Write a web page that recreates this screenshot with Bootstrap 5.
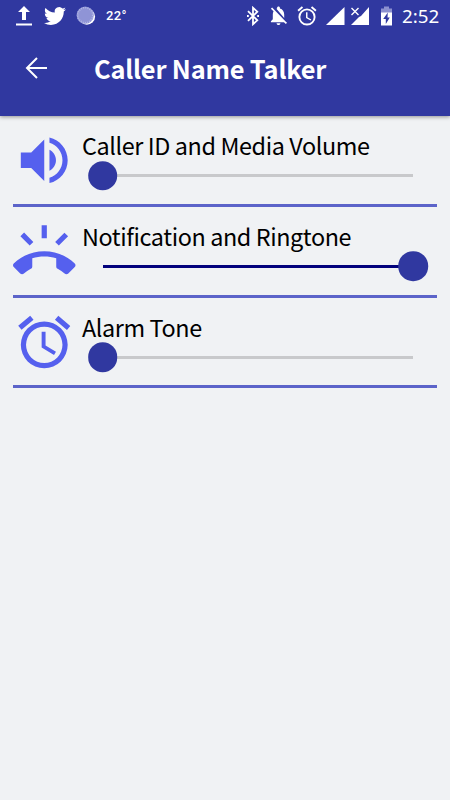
<!DOCTYPE html>
<html lang="en">
<head>
<meta charset="utf-8">
<meta name="viewport" content="width=device-width, initial-scale=1">
<title>Caller Name Talker</title>
<link href="https://cdn.jsdelivr.net/npm/bootstrap@5.3.0/dist/css/bootstrap.min.css" rel="stylesheet">
<style>
body{background:#f0f2f4;font-family:"Noto Sans CJK SC","Noto Sans",sans-serif;overflow:hidden}
svg{display:block;flex:none}
.app-header{background:#3038a0;height:116px;box-shadow:0 1px 4px rgba(0,0,0,.4)}
.status-bar{height:32px;padding-left:16px;padding-right:10px}
.icon-tweet{margin-left:12px}
.icon-weather{margin-left:10px}
.icon-bell{margin-left:9px}
.icon-clock{margin-left:9px}
.icon-signal{margin-left:9px}
.icon-nosim{margin-left:5px}
.icon-battery{margin-left:10px}
.status-temp{font:500 13px/32px Roboto,sans-serif;margin-left:10px;letter-spacing:.3px}
.status-clock{font:400 18.8px/32px "Noto Sans",sans-serif;margin-left:9px;width:38px;white-space:nowrap}
.app-bar{height:72px;padding-left:25px}
.app-title{font-size:25.4px;line-height:40px;font-weight:700;margin-left:45px;letter-spacing:-.2px}
.setting{height:90.8px;margin:0 13px;border-bottom:3px solid #5c64c9}
.setting-icon{width:62.5px;height:62.5px;margin-top:13.4px;fill:#5560ee}
.setting-body{margin-left:6.5px;padding-top:13.2px}
.setting-label{font-size:23.4px;line-height:32px;color:#000;white-space:nowrap;letter-spacing:-.4px}
.slider{height:30px;margin:-.5px 24px 0 20.5px}
.slider-track{height:3px;background:#c8c9cb}
.slider-full .slider-track{background:#02027c}
.slider-thumb{width:29.6px;height:29.6px;background:#3038a0;left:0;top:50%}
.slider-full .slider-thumb{left:100%}
</style>
</head>
<body>
<header class="app-header text-white position-relative">
  <div class="status-bar d-flex align-items-center">
    <svg width="16" height="20" viewBox="0 0 16 20" fill="#fff"><path d="M8 0l6 6h-4v8H6V6H2zM0 17.400h16v2H0z"/></svg>
    <svg class="icon-tweet" width="22" height="22" viewBox="0 0 24 24" fill="#fff"><path d="M23.950 4.570a10 10 0 0 1-2.820.77 4.960 4.960 0 0 0 2.160-2.720c-.95.55-2 .96-3.130 1.180a4.920 4.920 0 0 0-8.380 4.480C7.690 8.090 4.070 6.130 1.640 3.160a4.800 4.800 0 0 0-.67 2.480c0 1.710.87 3.210 2.190 4.100a4.900 4.900 0 0 1-2.230-.62v.06a4.920 4.920 0 0 0 3.950 4.830 5 5 0 0 1-2.210.08 4.940 4.940 0 0 0 4.600 3.420A9.870 9.870 0 0 1 0 19.540a13.990 13.990 0 0 0 7.550 2.210c9.060 0 14.010-7.500 14.010-13.980 0-.21 0-.42-.02-.63a9.940 9.940 0 0 0 2.460-2.550z"/></svg>
    <svg class="icon-weather" width="20" height="20" viewBox="0 0 20 20"><circle cx="10.800" cy="10.500" r="8.300" fill="#fff"/><circle cx="9.200" cy="9.200" r="8.600" fill="#8f94d6"/><circle cx="9.200" cy="9.200" r="7.500" fill="none" stroke="#b4b8e6" stroke-width="1.600" stroke-dasharray="1 1.200"/></svg>
    <span class="status-temp">22°</span>
    <div class="d-flex align-items-center ms-auto">
      <svg width="14" height="20" viewBox="0 0 14 20" fill="none" stroke="#fff" stroke-width="1.800"><path d="M2 5.200l9.300 9.100L7 18.200V1.800l4.300 3.900L2 14.800"/><path d="M1 10h1.800M11.200 10H13"/></svg>
      <svg class="icon-bell" width="19" height="20" viewBox="2 2 20 21" fill="#fff"><path d="M20 18.690L7.840 6.140 5.270 3.490 4 4.760l2.800 2.800v.01c-.52.99-.8 2.160-.8 3.420v5l-2 2v1h13.730l2 2L21 19.720l-1-1.030zM12 22c1.110 0 2-.89 2-2h-4c0 1.110.89 2 2 2zm6-7.320V11c0-3.080-1.640-5.640-4.500-6.320V4c0-.83-.67-1.500-1.500-1.500s-1.500.67-1.500 1.500v.68c-.15.03-.29.08-.42.12-.1.03-.2.07-.3.110z"/></svg>
      <svg class="icon-clock" width="20" height="20" viewBox="2 1.500 20 21" fill="#fff"><path d="M22 5.720l-4.600-3.860-1.290 1.530 4.600 3.860zM7.880 3.390L6.600 1.860 2 5.710l1.290 1.530zM12.500 8H11v6l4.750 2.850.75-1.230-4-2.370zM12 4a9 9 0 1 0 0 18 9 9 0 0 0 0-18zm0 16a7 7 0 1 1 0-14 7 7 0 0 1 0 14z"/></svg>
      <svg class="icon-signal" width="19" height="20" viewBox="0 0 19 20" fill="#fff"><path d="M0 19L18.500 1v18z"/></svg>
      <svg class="icon-nosim" width="20" height="20" viewBox="0 0 20 20" fill="#fff"><path d="M1 19L9 11l2-1 8-9v18z"/><path d="M1.500 2l7 7M8.500 2l-7 7" stroke="#fff" stroke-width="1.400"/></svg>
      <svg class="icon-battery" width="13" height="20" viewBox="0 0 13 20"><path d="M4 .5h5v2h3V7H1V2.500h3z" fill="#8c90cf"/><path d="M1 6.500h11v13H1z" fill="#fff"/><path d="M7.800 6.500L3.200 13h2.600v5l4-6.500H7.500z" fill="#3038a0"/></svg>
      <span class="status-clock">2:52</span>
    </div>
  </div>
  <div class="app-bar d-flex align-items-center">
    <svg width="24" height="24" viewBox="0 0 24 24" fill="none" stroke="#fff" stroke-width="2"><path d="M22 12H2.500M12 2L2 12l10 10"/></svg>
    <h1 class="app-title mb-0">Caller Name Talker</h1>
  </div>
</header>
<main>
  <section class="setting d-flex">
    <svg class="setting-icon" viewBox="0 0 24 24"><path d="M3 9v6h4l5 5V4L7 9H3zm13.500 3c0-1.770-1.020-3.290-2.500-4.030v8.050c1.480-.73 2.500-2.250 2.500-4.020zM14 3.230v2.060c2.890.86 5 3.540 5 6.710s-2.110 5.850-5 6.710v2.060c4.010-.91 7-4.490 7-8.770s-2.990-7.860-7-8.770z"/></svg>
    <div class="setting-body flex-grow-1">
      <div class="setting-label">Caller ID and Media Volume</div>
      <div class="slider position-relative d-flex align-items-center"><div class="slider-track w-100"></div><span class="slider-thumb rounded-circle position-absolute translate-middle"></span></div>
    </div>
  </section>
  <section class="setting d-flex">
    <svg class="setting-icon" viewBox="0 0 24 24"><path d="M23.710 16.670C20.660 13.780 16.540 12 12 12 7.460 12 3.340 13.780.29 16.670c-.18.18-.29.43-.29.71 0 .28.11.53.29.71l2.480 2.480c.18.18.43.29.71.29.27 0 .52-.11.7-.28.79-.74 1.690-1.360 2.660-1.850.33-.16.56-.5.56-.9v-3.100c1.450-.48 3-.73 4.600-.73s3.150.25 4.600.72v3.100c0 .39.23.74.56.9.98.49 1.870 1.120 2.660 1.850.18.18.43.28.7.28.28 0 .53-.11.71-.29l2.480-2.480c.18-.18.29-.43.29-.71 0-.28-.12-.52-.3-.7zM21.160 6.260l-1.410-1.410-3.560 3.550 1.410 1.410zM13 2h-2v5h2V2zM6.400 9.810L7.810 8.400 4.260 4.840 2.840 6.260z"/></svg>
    <div class="setting-body flex-grow-1">
      <div class="setting-label">Notification and Ringtone</div>
      <div class="slider slider-full position-relative d-flex align-items-center"><div class="slider-track w-100"></div><span class="slider-thumb rounded-circle position-absolute translate-middle"></span></div>
    </div>
  </section>
  <section class="setting d-flex">
    <svg class="setting-icon" viewBox="0 0 24 24"><path d="M22 5.720l-4.600-3.860-1.290 1.530 4.600 3.860zM7.880 3.390L6.600 1.860 2 5.710l1.290 1.530zM12.500 8H11v6l4.750 2.850.75-1.230-4-2.370zM12 4a9 9 0 1 0 0 18 9 9 0 0 0 0-18zm0 16a7 7 0 1 1 0-14 7 7 0 0 1 0 14z"/></svg>
    <div class="setting-body flex-grow-1">
      <div class="setting-label">Alarm Tone</div>
      <div class="slider position-relative d-flex align-items-center"><div class="slider-track w-100"></div><span class="slider-thumb rounded-circle position-absolute translate-middle"></span></div>
    </div>
  </section>
</main>
<script src="https://cdn.jsdelivr.net/npm/bootstrap@5.3.0/dist/js/bootstrap.bundle.min.js"></script>
</body>
</html>
